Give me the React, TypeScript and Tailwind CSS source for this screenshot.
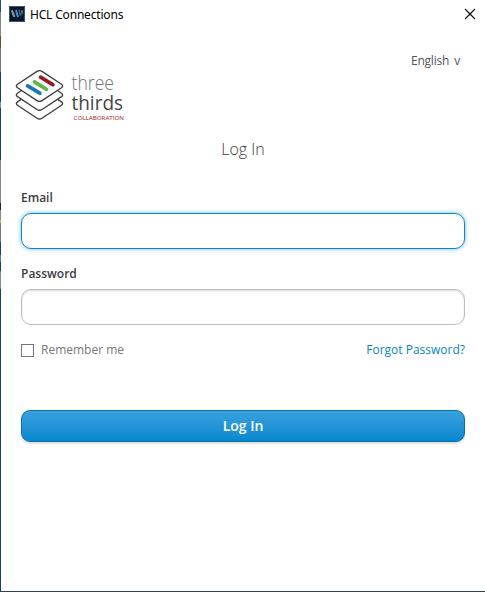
import React from 'react';

function AppIcon() {
  return (
    <svg width="16" height="16" viewBox="0 0 16 16" className="block">
      <rect x="0.5" y="0.5" width="15" height="15" fill="#0e1722" stroke="#2b5585" />
      <path d="M2 4.500 3.800 4l2.700 6.500-1.800.7Q2.600 9 2 4.500Z" fill="#8795a0" />
      <path d="M6.200 4 7.800 3.800l2.200 7-1.700.6Q6.500 8.500 6.200 4Z" fill="#3d8fd8" />
      <path d="M9.600 4 10.700 3.600l1.400 6-.9 1Q9.900 8 9.600 4Z" fill="#2875c0" />
      <path d="M12.300 4.500 13.600 4q.5 3.600-.8 5.600Z" fill="#98a5b0" />
    </svg>
  );
}

function Logo() {
  return (
    <svg width="112" height="56" viewBox="0 0 112 56" className="block overflow-visible">
      <g fill="#fff" stroke="#3f3f42" strokeWidth="1.35" strokeLinejoin="round">
        <path d="M2.500 34.900 22 22q2.500-1.500 5 0l19.500 12.900q2.200 1.700 0 3.400L27 51.200q-2.500 1.600-5 0L2.500 38.300q-2.200-1.700 0-3.400Z" />
        <path d="M2.500 26.200 22 13.300q2.500-1.500 5 0l19.500 12.900q2.200 1.700 0 3.400L27 42.500q-2.500 1.600-5 0L2.500 29.600q-2.200-1.700 0-3.400Z" />
        <path d="M2.500 17.300 22 4.400q2.500-1.500 5 0l19.500 12.900q2.200 1.700 0 3.400L27 33.600q-2.500 1.600-5 0L2.500 20.700q-2.200-1.700 0-3.400Z" />
      </g>
      <g strokeWidth="3.8" strokeLinecap="round">
        <path d="m12.600 18.900 12.200 7.300" stroke="#1c75bc" />
        <path d="m19.500 14.900 12 7.400" stroke="#65b54a" />
        <path d="m25.600 10.200 12.200 7.500" stroke="#941d22" />
      </g>
      <text x="56.500" y="22.500" textLength="42.500" lengthAdjust="spacingAndGlyphs" fill="#747477" className="font-['Open_Sans',sans-serif] text-[21px] font-light">three</text>
      <text x="56.500" y="43" textLength="51.500" lengthAdjust="spacingAndGlyphs" fill="#454548" className="font-['Open_Sans',sans-serif] text-[20.5px] font-normal">thirds</text>
      <text x="58.500" y="53" textLength="50.500" lengthAdjust="spacingAndGlyphs" fill="#a02024" className="font-['Open_Sans',sans-serif] text-[5.5px] font-medium">COLLABORATION</text>
    </svg>
  );
}

export default function App() {
  return (
    <div className="flex h-[592px] w-[485px] overflow-hidden border-b border-[#29405a] bg-white font-['Open_Sans','Noto_Sans',sans-serif] text-[#3c3c40]">
      <div className="flex w-px shrink-0 flex-col bg-[#174466]">
        <div className="h-3 bg-[#264c70]" />
        <div className="h-6 bg-[#858585]" />
        <div className="h-3 bg-[#744c26]" />
        <div className="h-6 bg-[#777]" />
        <div className="h-[30px] bg-[#174466]" />
        <div className="h-[6px] bg-[#7397a3]" />
        <div className="h-[52px] bg-[#174466]" />
        <div className="h-[43px] bg-[#858585]" />
        <div className="h-[7px] bg-[#27252a]" />
        <div className="h-[10px] bg-[#888]" />
        <div className="h-[3px] bg-[#c4ba20]" />
        <div className="h-[19px] bg-[#747a7c]" />
        <div className="h-[13px] bg-[#174466]" />
        <div className="h-[7px] bg-[#4d859b]" />
        <div className="h-[9px] bg-[#174466]" />
        <div className="h-[18px] bg-[#828f90]" />
      </div>
      <div className="flex min-w-0 grow flex-col">
        <header className="flex h-7 shrink-0 items-center pr-[9px] pl-2">
          <AppIcon />
          <h1 className="mt-[2px] ml-[5px] grow font-['Noto_Sans',sans-serif] text-[12px] tracking-[-0.18px] whitespace-nowrap text-black">HCL Connections</h1>
          <button aria-label="Close">
            <svg width="12" height="12" viewBox="0 0 12 12" fill="none" stroke="#000" strokeWidth="1.1"><path d="m1 1 10 10M11 1 1 11" /></svg>
          </button>
        </header>
        <main className="flex grow flex-col px-5">
          <div className="flex h-[98px] items-start justify-between">
            <div className="-ml-[6px] pt-[39px]"><Logo /></div>
            <button className="mt-6 mr-[5px] flex items-center gap-[5px] text-[12px] leading-[18px] tracking-[-0.2px] text-[#4f5561]">
              English <span>v</span>
            </button>
          </div>
          <h2 className="mt-[11px] h-6 text-center text-[16px] leading-6 font-light">Log In</h2>
          <form className="flex flex-col" onSubmit={(e) => e.preventDefault()}>
            <label htmlFor="email" className="mt-[27px] h-5 text-[12px] leading-5 font-semibold">Email</label>
            <input id="email" type="email" className="mt-[5px] h-9 rounded-[10px] border border-[#0b86cd] px-3 text-[13px] shadow-[0_0_4px_#0b86cd99] outline-none" />
            <label htmlFor="password" className="mt-[15px] h-5 text-[12px] leading-5 font-semibold">Password</label>
            <input id="password" type="password" className="mt-[5px] h-9 rounded-[10px] border border-[#bdbdbd] px-3 text-[13px] shadow-[inset_0_1px_2px_#00000026] outline-none" />
            <div className="mt-[15px] flex h-5 items-center text-[12px]">
              <input id="remember" type="checkbox" className="size-[13px] appearance-none border border-[#767676] bg-white" />
              <label htmlFor="remember" className="ml-[7px] grow text-[#777]">Remember me</label>
              <a href="#forgot" className="text-[#0784ca]">Forgot Password?</a>
            </div>
            <button className="mt-[50px] h-8 rounded-[9px] border border-[#0870a6] bg-linear-to-b from-[#38a1de] to-[#0387cf] text-[14px] leading-5 font-semibold text-white shadow-[0_2px_2px_#00000020]">Log In</button>
          </form>
        </main>
      </div>
    </div>
  );
}
